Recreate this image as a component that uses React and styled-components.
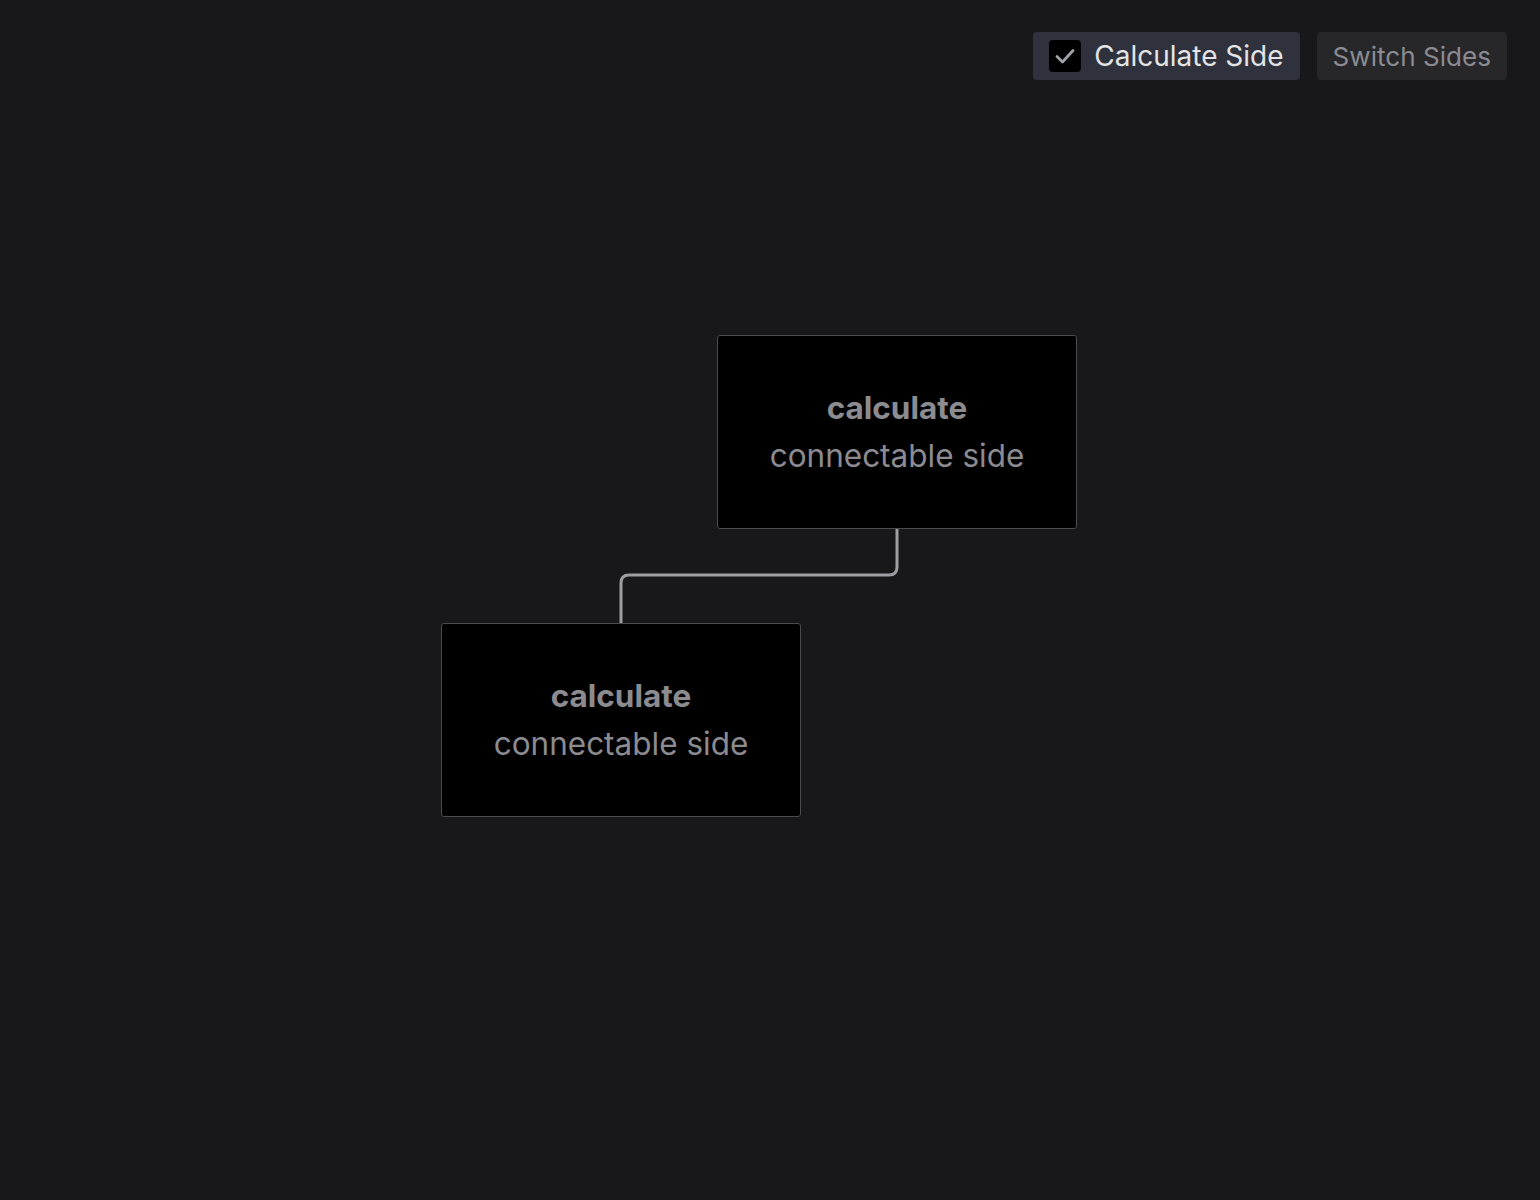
import React, { useState } from 'react';
import styled, { createGlobalStyle } from 'styled-components';

const GlobalStyle = createGlobalStyle`
	html, body {
		margin: 0;
		padding: 0;
		background: #18181b;
	}
	body {
		font-family: Inter, 'Noto Sans', sans-serif;
	}
`;

const Page = styled.div`
	position: relative;
	width: 1540px;
	height: 1200px;
	background: #18181b;
	overflow: hidden;
`;

const Toolbar = styled.div`
	position: absolute;
	top: 32px;
	right: 33px;
	display: flex;
	gap: 17px;
	z-index: 5;
`;

const ToolButton = styled.button`
	display: flex;
	align-items: center;
	gap: 13px;
	height: 48px;
	padding: 0 16px;
	border: none;
	border-radius: 4px;
	background: ${props => (props.active ? '#2f323c' : '#27272a')};
	color: ${props => (props.active ? '#e4e4e7' : '#8b8b92')};
	font-family: Inter, sans-serif;
	font-size: ${props => props.size || 28}px;
	cursor: pointer;
`;

const Check = styled.span`
	display: flex;
	align-items: center;
	justify-content: center;
	width: 32px;
	height: 32px;
	border-radius: 4px;
	background: #000;
`;

const Canvas = styled.div`
	position: absolute;
	inset: 0;
`;

const Node = styled.div`
	position: absolute;
	box-sizing: border-box;
	width: 360px;
	height: 194px;
	display: flex;
	flex-direction: column;
	align-items: center;
	justify-content: center;
	background: #000;
	border: 1px solid #4a4a50;
	border-radius: 3px;
	color: #8b8b90;
	font-size: 31.5px;
	line-height: 48px;
`;

const Title = styled.div`
	font-weight: 700;
`;

const Subtitle = styled.div`
	font-weight: 400;
`;

const nodes = [
	{ id: 'a', x: 717, y: 335 },
	{ id: 'b', x: 441, y: 623 },
];

const App = () => {
	const [calc, setCalc] = useState(true);
	return <Page>
		<GlobalStyle />
		<Canvas>
			<svg width="1540" height="1200" style={{ position: 'absolute', left: 0, top: 0 }}>
				<path d="M897 528 L897 567 Q897 575 889 575 L629 575 Q621 575 621 583 L621 623" fill="none" stroke="#9d9da2" strokeWidth="3" />
			</svg>
			{nodes.map(n => <Node key={n.id} style={{ left: n.x, top: n.y }}>
				<Title>calculate</Title>
				<Subtitle>connectable side</Subtitle>
			</Node>)}
		</Canvas>
		<Toolbar>
			<ToolButton active onClick={() => setCalc(!calc)}>
				<Check>
					{calc && <svg width="24" height="24" viewBox="0 0 24 24" fill="none" stroke="#a1a1aa" strokeWidth="2.8" strokeLinecap="round" strokeLinejoin="round">
						<path d="M4 12.5 L9.5 18 L20 6.5" />
					</svg>}
				</Check>
				Calculate Side
			</ToolButton>
			<ToolButton size={26.1}>Switch Sides</ToolButton>
		</Toolbar>
	</Page>;
};

export default App;
